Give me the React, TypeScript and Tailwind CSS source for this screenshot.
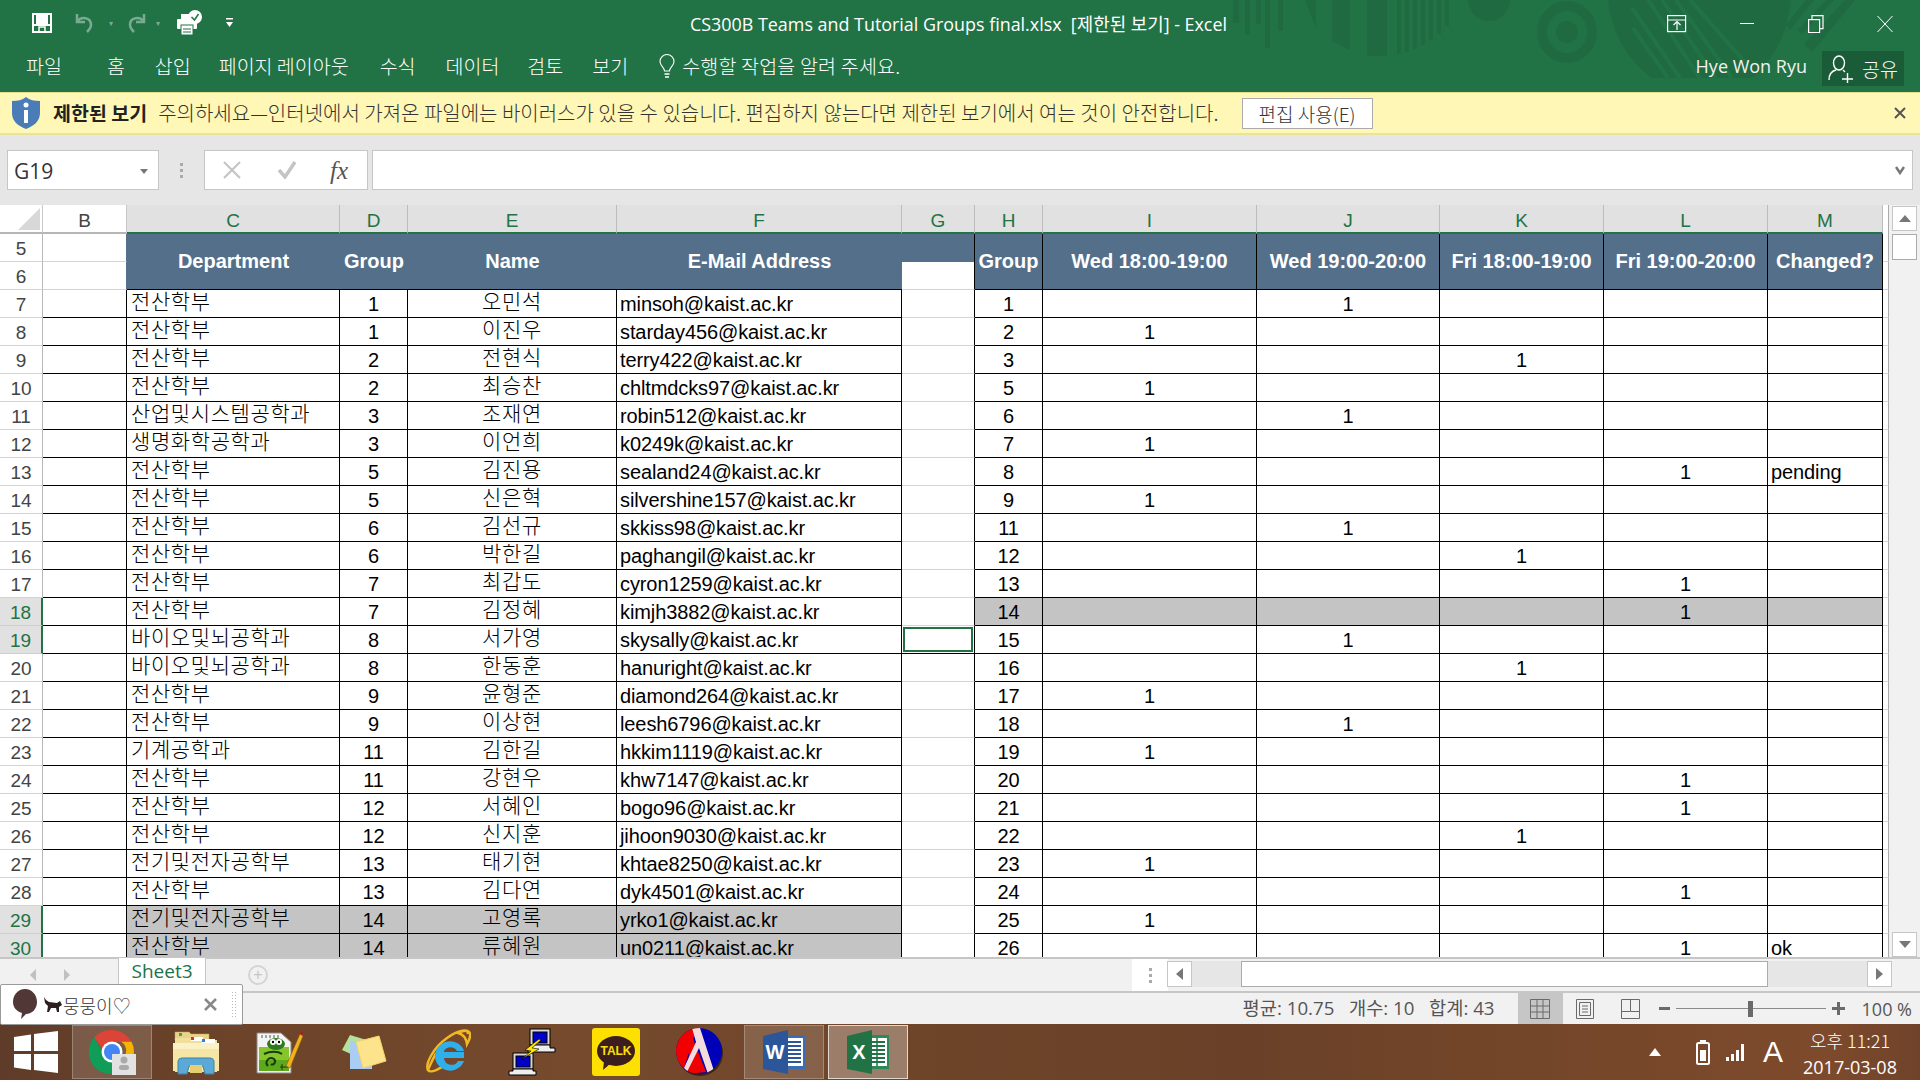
import React from "react";

type R = [number, string, number, string, string, number, number, string?];
// row, dept, group, name, email, h, mark column (0=I,1=J,2=K,3=L), changed
const rows: R[] = [
  [7, "전산학부", 1, "오민석", "minsoh@kaist.ac.kr", 1, 1],
  [8, "전산학부", 1, "이진우", "starday456@kaist.ac.kr", 2, 0],
  [9, "전산학부", 2, "전현식", "terry422@kaist.ac.kr", 3, 2],
  [10, "전산학부", 2, "최승찬", "chltmdcks97@kaist.ac.kr", 5, 0],
  [11, "산업및시스템공학과", 3, "조재연", "robin512@kaist.ac.kr", 6, 1],
  [12, "생명화학공학과", 3, "이언희", "k0249k@kaist.ac.kr", 7, 0],
  [13, "전산학부", 5, "김진용", "sealand24@kaist.ac.kr", 8, 3, "pending"],
  [14, "전산학부", 5, "신은혁", "silvershine157@kaist.ac.kr", 9, 0],
  [15, "전산학부", 6, "김선규", "skkiss98@kaist.ac.kr", 11, 1],
  [16, "전산학부", 6, "박한길", "paghangil@kaist.ac.kr", 12, 2],
  [17, "전산학부", 7, "최갑도", "cyron1259@kaist.ac.kr", 13, 3],
  [18, "전산학부", 7, "김정혜", "kimjh3882@kaist.ac.kr", 14, 3],
  [19, "바이오및뇌공학과", 8, "서가영", "skysally@kaist.ac.kr", 15, 1],
  [20, "바이오및뇌공학과", 8, "한동훈", "hanuright@kaist.ac.kr", 16, 2],
  [21, "전산학부", 9, "윤형준", "diamond264@kaist.ac.kr", 17, 0],
  [22, "전산학부", 9, "이상현", "leesh6796@kaist.ac.kr", 18, 1],
  [23, "기계공학과", 11, "김한길", "hkkim1119@kaist.ac.kr", 19, 0],
  [24, "전산학부", 11, "강현우", "khw7147@kaist.ac.kr", 20, 3],
  [25, "전산학부", 12, "서혜인", "bogo96@kaist.ac.kr", 21, 3],
  [26, "전산학부", 12, "신지훈", "jihoon9030@kaist.ac.kr", 22, 2],
  [27, "전기및전자공학부", 13, "태기현", "khtae8250@kaist.ac.kr", 23, 0],
  [28, "전산학부", 13, "김다연", "dyk4501@kaist.ac.kr", 24, 3],
  [29, "전기및전자공학부", 14, "고영록", "yrko1@kaist.ac.kr", 25, 0],
  [30, "전산학부", 14, "류혜원", "un0211@kaist.ac.kr", 26, 3, "ok"],
];

const black = "border-r border-b border-black";
const soft = "border-r border-b border-[#d4d4d4]";
const ko = "font-['Noto_Sans_CJK_KR',sans-serif] font-light text-[21px] tracking-[0.6px] leading-none";
const num = "text-[20px] tracking-[-0.1px] leading-none";

function ColHead({ t, white }: { t: string; white?: boolean }) {
  return (
    <div className={white
      ? "bg-white border-r border-r-[#c8c8c8] border-b-2 border-b-[#b5b5b5] flex items-center justify-center pt-[3px] text-[19px] leading-none text-[#444]"
      : "bg-[#e1e1e1] border-r border-r-[#bdbdbd] border-b-2 border-b-[#217346] flex items-center justify-center pt-[3px] text-[19px] leading-none text-[#217346]"}>
      {t}
    </div>
  );
}

function RowHead({ n, on }: { n: number; on?: boolean }) {
  return (
    <div className={on
      ? "bg-[#e1e1e1] border-r-2 border-r-[#217346] border-b border-b-[#cfcfcf] flex items-center justify-center pt-[1px] text-[19px] leading-none text-[#217346]"
      : "bg-white border-r border-r-[#b8b8b8] border-b border-b-[#d4d4d4] flex items-center justify-center pt-[1px] text-[19px] leading-none text-[#444]"}>
      {n}
    </div>
  );
}

function Head({ t, sep }: { t: string; sep?: boolean }) {
  return (
    <div className={`row-span-2 bg-[#546f8a] border-b border-black ${sep ? "border-r" : ""} flex items-center justify-center pb-[2px] text-white font-bold text-[20px] leading-none`}>
      {t}
    </div>
  );
}

function DataRow({ r }: { r: R }) {
  const [n, dept, g, name, email, h, mark, ch] = r;
  const leftGray = n >= 29;
  const rightGray = n === 18;
  const lb = leftGray ? "bg-[#c4c4c4]" : "bg-white";
  const rb = rightGray ? "bg-[#c4c4c4]" : "bg-white";
  return (
    <>
      <RowHead n={n} on={n === 18 || n === 19 || n >= 29} />
      <div className={`${black} bg-white`} />
      <div className={`${black} ${lb} flex items-center pl-[4px] pb-[6px] text-black ${ko}`}>{dept}</div>
      <div className={`${black} ${lb} flex items-center justify-center text-black ${num}`}>{g}</div>
      <div className={`${black} ${lb} flex items-center justify-center pb-[6px] text-black ${ko}`}>{name}</div>
      <div className={`${black} ${lb} flex items-center pl-[3px] text-black ${num}`}>{email}</div>
      {n === 19 ? (
        <div className="border-r border-b border-black bg-white p-[1px]">
          <div className="h-full w-full border-2 border-[#217346] bg-white" />
        </div>
      ) : (
        <div className="border-r border-r-black border-b border-b-[#d4d4d4] bg-white" />
      )}
      <div className={`${black} ${rb} flex items-center justify-center text-black ${num}`}>{h}</div>
      {[0, 1, 2, 3].map((c) => (
        <div key={c} className={`${black} ${rb} flex items-center justify-center text-black ${num}`}>
          {mark === c ? 1 : ""}
        </div>
      ))}
      <div className={`${black} ${rb} flex items-center pl-[3px] text-black ${num}`}>{ch}</div>
      <div className={`${soft} border-r-[#aaaaaa] bg-white`} />
    </>
  );
}

function TitlePattern() {
  return (
    <svg className="absolute left-[1220px] top-0 pointer-events-none" width="700" height="92" viewBox="1220 0 700 92" fill="#1f6a41">
      <rect x="1233" y="0" width="6" height="23" />
      <rect x="1245" y="0" width="5" height="35" />
      <rect x="1256" y="0" width="5" height="24" />
      <rect x="1265" y="0" width="5" height="48" />
      <rect x="1278" y="0" width="5" height="31" />
      <path d="M1305 0 L1316 0 L1316 28 Z" />
      <path d="M1332 0 H1350 V50 L1332 41 Z" />
      <path d="M1367 0 H1387 V56 H1367 Z" />
      <rect x="1397" y="0" width="4" height="54" />
      <rect x="1405" y="0" width="4" height="52" />
      <rect x="1413" y="0" width="4" height="49" />
      <rect x="1421" y="0" width="4" height="45" />
      <rect x="1429" y="0" width="4" height="40" />
      <rect x="1437" y="0" width="4" height="34" />
      <rect x="1445" y="0" width="4" height="26" />
      <path d="M1468 0 A21 21 0 0 0 1510 0 Z" />
      <ellipse cx="1567" cy="32" rx="25" ry="26" fill="none" stroke="#1f6a41" strokeWidth="10" />
      <circle cx="1567" cy="32" r="11" />
      <path d="M1608 0 C1612 36 1630 62 1652 78 L1752 78 C1776 58 1788 30 1791 0 Z" />
      <g stroke="#217346" strokeWidth="4" fill="none">
        <path d="M1632 8 L1680 78" />
        <path d="M1633 28 L1668 78" />
        <path d="M1648 0 L1700 78" />
        <path d="M1662 0 L1716 78" />
        <path d="M1676 0 L1732 78" />
        <path d="M1690 0 L1745 62" />
      </g>
      <path d="M1806 0 L1814 0 L1790 30 L1786 25 Z" />
      <path d="M1826 0 L1834 0 L1802 34 L1798 30 Z" />
      <path d="M1845 0 L1855 0 L1812 52 L1804 44 Z" />
    </svg>
  );
}

function Chrome() {
  return (
    <svg width="48" height="46" viewBox="0 0 48 46">
      <path d="M24 1a22 22 0 0 1 19.5 11.8H24a10 10 0 0 0-9.6 7L6.2 8.500A22 22 0 0 1 24 1z" fill="#db4437" />
      <path d="M43.500 12.800A22 22 0 0 1 26 44.900l10-17.200A10 10 0 0 0 33 12.800z" fill="#f4b400" />
      <path d="M6.200 8.500l9 15.600A10 10 0 0 0 27 32.500l-3 12.500A22 22 0 0 1 6.200 8.500z" fill="#0f9d58" />
      <circle cx="24" cy="23" r="10.500" fill="#fff" />
      <circle cx="24" cy="23" r="8" fill="#4285f4" />
      <rect x="24" y="25" width="24" height="21" fill="#e2e2e2" />
      <circle cx="36" cy="31" r="3.500" fill="#a9a9a9" />
      <rect x="31" y="36" width="10" height="5" rx="2.500" fill="#a9a9a9" />
    </svg>
  );
}

function Folder() {
  return (
    <svg width="48" height="46" viewBox="0 0 48 46">
      <path d="M3 3h14l2 2h18v6H3z" fill="#e8d38a" stroke="#bfa65a" strokeWidth=".5" />
      <rect x="7" y="4" width="3" height="3" fill="#3fa34d" />
      <path d="M3 9h20l2 2h20v32H3z" fill="#f1de9a" />
      <rect x="19" y="8" width="12" height="4" fill="#fff" />
      <rect x="19" y="8" width="3" height="3" fill="#d9342b" />
      <rect x="30" y="10" width="13" height="4" fill="#fff" />
      <rect x="30" y="10" width="3" height="3" fill="#2f7fd0" />
      <path d="M1 14h46v28H1z" fill="#f6e6a6" />
      <path d="M1 14h46v6H1z" fill="#fbf1c6" />
      <path d="M6 45V32a4 4 0 0 1 4-3h28a4 4 0 0 1 4 3v13h-9l-2-8H17l-2 8z" fill="#5aa9d6" stroke="#3a82ad" />
      <rect x="18" y="36" width="12" height="8" fill="#e6cf70" />
    </svg>
  );
}

function NotepadPP() {
  return (
    <svg width="48" height="44" viewBox="0 0 48 44">
      <path d="M1 3h24l10 9v31H1z" fill="#f4f4f4" stroke="#8a8a8a" />
      <path d="M3 17h30v24H3z" fill="#86c62c" />
      <path d="M3 30h30v11H3z" fill="#5da81d" />
      <path d="M6 5v3M10 5v3M14 5v3M18 5v3M22 5v3" stroke="#555" />
      <ellipse cx="20" cy="14" rx="9" ry="6" fill="#2c7a1c" />
      <circle cx="17" cy="12" r="3" fill="#fff" />
      <circle cx="23" cy="12" r="3" fill="#fff" />
      <circle cx="17" cy="12" r="1.200" />
      <circle cx="23" cy="12" r="1.200" />
      <path d="M8 24c6-3 14-3 18 0M12 36c-4-4 1-10 6-7 3 3-1 7-3 5" fill="none" stroke="#143d0b" strokeWidth="2" />
      <path d="M24 37h8M26 34v6" stroke="#143d0b" />
      <path d="M30 36L44 4l3 2-13 32z" fill="#f1b420" stroke="#8a5c10" strokeWidth=".6" />
      <path d="M44 4l1-3 2 1v3z" fill="#a52020" />
    </svg>
  );
}

function Sticky() {
  return (
    <svg width="46" height="38" viewBox="0 0 46 38">
      <path d="M1 17L9 2l20 6-8 18z" fill="#b4e29c" />
      <path d="M9 8h22v28H9z" fill="#a9cdf3" />
      <path d="M15 9l23-6 7 25-23 7z" fill="#fde48c" stroke="#f4d36a" />
    </svg>
  );
}

function IE() {
  return (
    <svg width="46" height="46" viewBox="0 0 46 46">
      <path d="M3 41C0 35 8 19 22 9 33 1 44-1 45 5c1 3-2 8-3 10-1-7-5-10-9-11 7-3 10-3 10 1" fill="none" stroke="#f2b824" strokeWidth="2.500" />
      <path d="M11 24C8 30 4 38 3 41c2 3 9 0 14-3" fill="none" stroke="#f2b824" strokeWidth="2.500" />
      <path d="M10 26a15 15 0 0 1 29-4H32a7.500 7.500 0 0 0-13 0v1h20v6H19a7.500 7.500 0 0 0 14 3h6a15 15 0 0 1-29-6z" fill="#2fb0ea" />
    </svg>
  );
}

function Putty() {
  return (
    <svg width="48" height="48" viewBox="0 0 48 48">
      <g stroke="#000" strokeWidth="1">
        <rect x="22" y="1" width="20" height="16" fill="#d8d8d8" />
        <rect x="25" y="4" width="14" height="11" fill="#0000c8" />
        <path d="M22 17h20v3h5v4H20v-4h2z" fill="#efefef" />
        <rect x="5" y="25" width="20" height="16" fill="#d8d8d8" />
        <rect x="8" y="28" width="14" height="11" fill="#0000c8" />
        <path d="M5 41h20v2h3v4H1v-4h4z" fill="#efefef" />
      </g>
      <path d="M31 11L17 22l6 1-9 8 17-10-7-1 9-8z" fill="#ffe600" stroke="#000" strokeWidth=".6" />
    </svg>
  );
}

function Talk() {
  return (
    <div className="w-[48px] h-[48px] bg-[#fee000] rounded-[3px] flex items-center justify-center relative">
      <div className="w-[38px] h-[30px] bg-[#3c1e1e] rounded-[50%] flex items-center justify-center text-[#fee000] text-[12px] font-bold leading-none mb-[3px] font-['Liberation_Sans',sans-serif]">TALK</div>
      <svg className="absolute left-[11px] top-[33px]" width="8" height="9" viewBox="0 0 8 9"><path d="M1 0L0 9l8-7z" fill="#3c1e1e" /></svg>
    </div>
  );
}

function Racket() {
  return (
    <svg width="48" height="48" viewBox="0 0 48 48">
      <defs>
        <clipPath id="rk"><ellipse cx="23" cy="23" rx="23" ry="23" /></clipPath>
      </defs>
      <ellipse cx="24" cy="25" rx="23" ry="23" fill="#3a2318" />
      <g clipPath="url(#rk)">
        <rect width="48" height="48" fill="#0000b8" />
        <path d="M0 0h21l-4 12L6 46H0z" fill="#f00000" />
        <path d="M15 6L30 44 L11 46z" fill="#f00000" />
        <path d="M16 0h8l15 46h-7L23 20 11 44 8 40 20 14z" fill="#f4dcdc" />
      </g>
    </svg>
  );
}

function OfficeIcon({ letter, dark, light }: { letter: string; dark: string; light: string }) {
  return (
    <svg width="44" height="44" viewBox="0 0 44 44">
      <rect x="17" y="5" width="26" height="34" fill={light} />
      <rect x="22" y="8" width="19" height="28" fill="#fff" />
      <path d="M24 12h15M24 16h15M24 20h15M24 24h15M24 28h15M24 32h15" stroke={dark} strokeWidth="2" />
      {letter === "X" && <path d="M31 8v28" stroke={dark} strokeWidth="1.500" />}
      <path d="M1 6L26 0v44L1 39z" fill={dark} />
      <text x="13" y="29" textAnchor="middle" fontFamily="Liberation Sans" fontWeight="700" fontSize="20" fill="#fff">{letter}</text>
    </svg>
  );
}

function Save() {
  return (
    <svg width="22" height="22" viewBox="0 0 22 22" fill="none" stroke="#fff" strokeWidth="2">
      <path d="M2 2h18v18H2z" fill="#217346" />
      <path d="M2 13h18" />
      <rect x="5" y="2" width="12" height="10" fill="#fff" stroke="none" />
      <rect x="8" y="15" width="6" height="5" strokeWidth="1.500" />
    </svg>
  );
}

function Tile({ children, cls }: { children: React.ReactNode; cls?: string }) {
  return <div className={`w-[80px] h-[54px] flex items-center justify-center shrink-0 border ${cls ?? "border-transparent"}`}>{children}</div>;
}

export default function App() {
  return (
    <div className="w-[1920px] h-[1080px] overflow-hidden flex flex-col bg-[#e6e6e6] font-['Liberation_Sans','Noto_Sans_CJK_KR',sans-serif] text-black">
      {/* Title + ribbon tabs */}
      <header className="relative h-[92px] shrink-0 bg-[#217346] text-white overflow-hidden font-['Open_Sans','Noto_Sans_CJK_KR',sans-serif]">
        <TitlePattern />
        <div className="relative h-[46px] flex items-center">
          <div className="w-[690px] flex items-center pl-[31px] shrink-0">
            <Save />
            <svg className="ml-[21px] opacity-40" width="26" height="22" viewBox="0 0 26 22" fill="none" stroke="#fff" strokeWidth="2.500"><path d="M3 2v8h8M3 10c4-6 14-5 14 3 0 3-2 5-4 7" /></svg>
            <span className="ml-[9px] text-[8px] opacity-40">▾</span>
            <svg className="ml-[8px] opacity-40" width="26" height="22" viewBox="0 0 26 22" fill="none" stroke="#fff" strokeWidth="2.500"><path d="M23 2v8h-8M23 10c-4-6-14-5-14 3 0 3 2 5 4 7" /></svg>
            <span className="ml-[9px] text-[8px] opacity-40">▾</span>
            <svg className="ml-[16px]" width="28" height="26" viewBox="0 0 28 26"><rect x="1" y="9" width="20" height="10" rx="1" fill="#fff" /><rect x="5" y="4" width="12" height="5" fill="#fff" /><rect x="5" y="15" width="12" height="10" fill="#fff" stroke="#217346" /><path d="M7 19h8M7 22h8" stroke="#217346" /><circle cx="19" cy="7" r="7" fill="#fff" /><path d="M15.500 7l3 3 4-6" stroke="#217346" fill="none" strokeWidth="1.500" /></svg>
            <svg className="ml-[21px]" width="10" height="12" viewBox="0 0 10 12" fill="#fff"><rect x="1" y="1" width="7" height="1.500" /><path d="M1 5h7L4.500 10z" /></svg>
          </div>
          <div className="text-[17.900px] whitespace-pre leading-none pt-[4px]">CS300B Teams and Tutorial Groups final.xlsx  [제한된 보기] - Excel</div>
          <div className="ml-auto flex items-center pr-[27px] pt-[1px]">
            <svg width="20" height="18" viewBox="0 0 20 18" fill="none" stroke="#fff" strokeWidth="1.200"><rect x=".6" y=".6" width="18" height="16" /><path d="M1 5h18M10 15V7M6.500 10L10 6.500l3.500 3.500" /></svg>
            <div className="ml-[53px] w-[14px] h-[1px] bg-white" />
            <svg className="ml-[54px]" width="16" height="18" viewBox="0 0 16 18" fill="none" stroke="#fff" strokeWidth="1.200"><rect x=".6" y="4.600" width="11" height="13" /><path d="M4 4.500V.6h11v13h-3" /></svg>
            <svg className="ml-[53px]" width="16" height="18" viewBox="0 0 16 18" fill="none" stroke="#fff" strokeWidth="1"><path d="M.5 1l15 16M15.500 1L.5 17" /></svg>
          </div>
        </div>
        <div className="relative h-[46px] flex items-center pl-[26px] text-[19.500px] font-['Noto_Sans_CJK_KR',sans-serif] font-light leading-none pb-[6px]">
          <span>파일</span>
          <span className="ml-[45px]">홈</span>
          <span className="ml-[30px]">삽입</span>
          <span className="ml-[28px]">페이지 레이아웃</span>
          <span className="ml-[31px]">수식</span>
          <span className="ml-[30px]">데이터</span>
          <span className="ml-[28px]">검토</span>
          <span className="ml-[29px]">보기</span>
          <svg className="ml-[31px]" width="16" height="24" viewBox="0 0 16 24" fill="none" stroke="#fff" strokeWidth="1.100"><path d="M5.500 17c0-4-4.500-5-4.500-9.500a7 7 0 0 1 14 0c0 4.500-4.500 5.500-4.500 9.500z" /><path d="M5.500 20h5M6 23h4" strokeWidth="1.500" /></svg>
          <span className="ml-[7px] tracking-[0.2px]">수행할 작업을 알려 주세요.</span>
          <span className="ml-auto mr-[15px] font-['Open_Sans',sans-serif] font-normal text-[18px] text-[#f2f2f2]">Hye Won Ryu</span>
          <div className="w-[82px] h-[35px] mr-[16px] bg-[#1b5c38] flex items-center justify-center gap-[8px] mt-[5px]">
            <svg width="26" height="30" viewBox="0 0 26 30" fill="none" stroke="#fff" strokeWidth="1.400"><ellipse cx="11" cy="9" rx="5.500" ry="7" /><path d="M1 26c0-6 3-9 7-10M15 16l2 2M14 25h11M19.500 19v10" /></svg>
            <span>공유</span>
          </div>
        </div>
      </header>

      {/* Protected view bar */}
      <div className="h-[43px] shrink-0 bg-[#fff7b6] border-t border-t-[#e3de8f] border-b-2 border-b-[#e9e49a] flex items-center pl-[12px] pr-[14px] text-[20px] text-[#333] font-['Noto_Sans_CJK_KR',sans-serif] font-light leading-none">
        <svg width="28" height="32" viewBox="0 0 28 32"><path d="M14 0c4 3 8 4 14 4v12c0 8-6 13-14 16C6 29 0 24 0 16V4c6 0 10-1 14-4z" fill="#4a7db8" /><circle cx="14" cy="8" r="2.500" fill="#fff" /><rect x="12" y="13" width="4" height="13" fill="#fff" /></svg>
        <b className="ml-[13px] font-bold text-[19.500px] text-[#222] whitespace-nowrap">제한된 보기</b>
        <span className="ml-[11px] whitespace-nowrap">주의하세요—인터넷에서 가져온 파일에는 바이러스가 있을 수 있습니다. 편집하지 않는다면 제한된 보기에서 여는 것이 안전합니다.</span>
        <div className="ml-[23px] w-[131px] h-[31px] shrink-0 bg-white border border-[#ababab] flex items-center justify-center text-[19px]">편집 사용(E)</div>
        <svg className="ml-auto" width="12" height="12" viewBox="0 0 12 12" stroke="#555" strokeWidth="2"><path d="M1 1l10 10M11 1L1 11" /></svg>
      </div>

      {/* Formula bar */}
      <div className="h-[70px] shrink-0 bg-[#e6e6e6] flex items-center pl-[7px] pr-[7px]">
        <div className="w-[152px] h-[40px] bg-white border border-[#c6c6c6] flex items-center justify-between pl-[6px] pr-[10px] pt-[3px] text-[21px] leading-none text-[#333] font-['Open_Sans',sans-serif]">
          <span>G19</span>
          <svg width="8" height="5" viewBox="0 0 8 5" fill="#777"><path d="M0 0h8L4 5z" /></svg>
        </div>
        <div className="w-[45px] flex flex-col items-center gap-[3px]">
          <div className="w-[3px] h-[3px] bg-[#aaa]" />
          <div className="w-[3px] h-[3px] bg-[#aaa]" />
          <div className="w-[3px] h-[3px] bg-[#aaa]" />
        </div>
        <div className="w-[164px] h-[40px] bg-white border border-[#c6c6c6] flex items-center pl-[18px]">
          <svg width="18" height="18" viewBox="0 0 18 18" stroke="#c4c4c4" strokeWidth="2.200"><path d="M1 1l16 16M17 1L1 17" /></svg>
          <svg className="ml-[36px]" width="20" height="18" viewBox="0 0 20 18" fill="none" stroke="#c4c4c4" strokeWidth="3.500"><path d="M2 9l6 7L18 1" /></svg>
          <span className="ml-[33px] font-['Liberation_Serif',serif] italic text-[25px] text-[#555] leading-none">fx</span>
        </div>
        <div className="ml-[4px] flex-1 h-[40px] bg-white border border-[#c6c6c6] flex items-center justify-end pr-[7px]">
          <svg width="10" height="9" viewBox="0 0 10 9" fill="none" stroke="#777" strokeWidth="2.500"><path d="M1 1l4 6 4-6" /></svg>
        </div>
      </div>

      {/* Sheet */}
      <div className="h-[752px] shrink-0 flex overflow-hidden bg-white">
        <div className="w-[1889px] shrink-0 overflow-hidden">
          <div className="grid grid-cols-[43px_84px_213px_68px_209px_285px_73px_68px_214px_183px_164px_164px_115px_6px] grid-rows-[29px] auto-rows-[28px]">
            <div className="bg-white border-r border-r-[#c8c8c8] border-b-2 border-b-[#b5b5b5] flex items-end justify-end pr-[2px] pb-[2px]">
              <svg width="22" height="22" viewBox="0 0 22 22"><path d="M22 0v22H0z" fill="#d8d8d8" /></svg>
            </div>
            <ColHead t="B" white />
            {["C", "D", "E", "F", "G", "H", "I", "J", "K", "L", "M"].map((c) => <ColHead key={c} t={c} />)}
            <div className="bg-white border-r border-r-[#aaaaaa]" />

            <RowHead n={5} />
            <div className="border-r border-r-[#546f8a] border-b border-b-[#d4d4d4]" />
            <Head t="Department" />
            <Head t="Group" />
            <Head t="Name" />
            <Head t="E-Mail Address" />
            <div className="bg-[#546f8a] border-r border-r-black" />
            <Head t="Group" sep />
            <Head t="Wed 18:00-19:00" sep />
            <Head t="Wed 19:00-20:00" sep />
            <Head t="Fri 18:00-19:00" sep />
            <Head t="Fri 19:00-20:00" sep />
            <Head t="Changed?" sep />
            <div className={`${soft} border-r-[#aaaaaa]`} />

            <RowHead n={6} />
            <div className="border-r border-r-[#546f8a] border-b border-b-[#d4d4d4]" />
            <div className="bg-white border-r border-r-black border-b border-b-[#d4d4d4]" />
            <div className={`${soft} border-r-[#aaaaaa]`} />

            {rows.map((r) => <DataRow key={r[0]} r={r} />)}
          </div>
        </div>
        <div className="flex-1 bg-[#f1f1f1] flex flex-col items-center pt-[1px]">
          <div className="w-[25px] h-[25px] bg-white border border-[#c6c6c6] flex items-center justify-center">
            <svg width="12" height="7" viewBox="0 0 12 7" fill="#777"><path d="M0 7L6 0l6 7z" /></svg>
          </div>
          <div className="w-[25px] h-[26px] mt-[3px] bg-white border border-[#ababab]" />
          <div className="mt-auto w-[25px] h-[25px] bg-white border border-[#c6c6c6] flex items-center justify-center">
            <svg width="12" height="7" viewBox="0 0 12 7" fill="#777"><path d="M0 0h12L6 7z" /></svg>
          </div>
        </div>
      </div>

      {/* Tabs + h-scroll */}
      <div className="relative h-[34px] shrink-0 bg-[#f1f1f1] border-t-2 border-t-[#c6c6c6] flex items-start pl-[30px]">
        <svg className="mt-[10px]" width="6" height="12" viewBox="0 0 6 12" fill="#c0c0c0"><path d="M6 0v12L0 6z" /></svg>
        <svg className="mt-[10px] ml-[28px]" width="6" height="12" viewBox="0 0 6 12" fill="#c0c0c0"><path d="M0 0v12l6-6z" /></svg>
        <div className="ml-[48px] w-[88px] h-[27px] bg-white border-x border-b border-[#c6c6c6] -mt-[1px] flex items-center justify-center text-[19px] text-[#217346] font-['Open_Sans',sans-serif]">Sheet3</div>
        <div className="ml-[42px] mt-[6px] w-[20px] h-[20px] rounded-full border-2 border-[#d4d4d4] flex items-center justify-center text-[#c6c6c6] text-[16px] leading-none">+</div>
        <div className="ml-[864px] flex self-stretch items-start w-[770px]">
          <div className="w-[36px] h-[32px] bg-white flex flex-col items-center justify-center gap-[3px]">
            <div className="w-[3px] h-[3px] bg-[#aaa]" />
            <div className="w-[3px] h-[3px] bg-[#aaa]" />
            <div className="w-[3px] h-[3px] bg-[#aaa]" />
          </div>
          <div className="mt-[2px] ml-[-1px] w-[725px] h-[26px] flex bg-[#e6e6e6]">
            <div className="w-[25px] h-full bg-white border border-[#c6c6c6] flex items-center justify-center">
              <svg width="7" height="12" viewBox="0 0 7 12" fill="#777"><path d="M7 0v12L0 6z" /></svg>
            </div>
            <div className="ml-[49px] w-[527px] h-full bg-white border border-[#ababab]" />
            <div className="ml-auto w-[25px] h-full bg-white border border-[#c6c6c6] flex items-center justify-center">
              <svg width="7" height="12" viewBox="0 0 7 12" fill="#777"><path d="M0 0v12l7-6z" /></svg>
            </div>
          </div>
        </div>
      </div>

      {/* Status bar */}
      <div className="relative h-[33px] shrink-0 bg-[#f1f1f1] border-t-2 border-t-[#c6c6c6] flex items-center justify-end text-[#555] text-[18.700px] font-['Open_Sans','Noto_Sans_CJK_KR',sans-serif]">
        <div className="absolute left-0 -top-[9px] w-[243px] h-[41px] bg-white border border-[#9a9a9a] rounded-[2px] flex items-center pl-[11px] z-10">
          <svg width="26" height="32" viewBox="0 0 26 32"><path d="M13 0c7 0 12 6 12 13s-5 12-11 12l-5 5 1-6C4 22 1 18 1 13 1 6 6 0 13 0z" fill="#523737" /></svg>
          <svg className="ml-[5px]" width="20" height="16" viewBox="0 0 20 16" fill="#2d2020"><path d="M1 0l2 3 3 2 8 1 3-2 2 4-3 2v5h-2l-1-4H8l-2 4H4l1-6L2 6z" /></svg>
          <span className="text-[18px] text-[#333] font-['Noto_Sans_CJK_KR',sans-serif] font-light leading-none">뭉뭉이♡</span>
          <svg className="ml-[73px]" width="13" height="13" viewBox="0 0 13 13" stroke="#888" strokeWidth="2.500"><path d="M1 1l11 11M12 1L1 12" /></svg>
          <div className="ml-[14px] w-[6px] h-[28px] bg-[radial-gradient(#bbb_1px,transparent_1px)] bg-[length:3px_3px]" />
        </div>
        <span className="leading-none mr-[23px] whitespace-pre">평균: 10.75   개수: 10   합계: 43</span>
        <div className="w-[45px] h-full bg-[#c6c6c6] flex items-center justify-center">
          <svg width="20" height="20" viewBox="0 0 20 20" fill="none" stroke="#6a6a6a"><path d="M.5.5h19v19H.5zM7 .5v19M13 .5v19M.5 7h19M.5 13h19" /></svg>
        </div>
        <svg className="ml-[13px]" width="18" height="20" viewBox="0 0 18 20" fill="none" stroke="#6a6a6a"><path d="M.5.5h17v19H.5zM3.500 3.500h11v13h-11zM6 7h6M6 10h6M6 13h6" /></svg>
        <svg className="ml-[27px]" width="19" height="20" viewBox="0 0 19 20" fill="none" stroke="#6a6a6a"><path d="M.5.500h18v19H.5zM.5 12.500h9v-12M9.500 12.500h9" /></svg>
        <div className="ml-[19px] w-[11px] h-[3px] bg-[#6a6a6a]" />
        <div className="ml-[6px] relative w-[150px] h-[1px] bg-[#8a8a8a] flex items-center">
          <div className="ml-[72px] w-[5px] h-[16px] bg-[#6a6a6a]" />
        </div>
        <svg className="ml-[6px]" width="13" height="13" viewBox="0 0 13 13" stroke="#6a6a6a" strokeWidth="3"><path d="M0 6.500h13M6.500 0v13" /></svg>
        <span className="ml-[17px] mr-[8px] leading-none text-[18px]">100 %</span>
      </div>

      {/* Taskbar */}
      <div className="h-[56px] shrink-0 flex items-center bg-[linear-gradient(90deg,#5f3c29_0%,#6d4329_12%,#754a2d_30%,#6e4429_50%,#6a4128_65%,#744629_80%,#7e4a2c_95%,#6f432a_100%)]">
        <div className="w-[72px] shrink-0 flex justify-center">
          <svg width="44" height="42" viewBox="0 0 44 42" fill="#fff"><path d="M0 6l17-2.500V20H0zM20 3l24-3v20H20zM0 23h17v16L0 36.500zM20 23h24v19l-24-3z" /></svg>
        </div>
        <div className="flex gap-[4px]">
          <Tile cls="bg-white/15 border-white/25"><Chrome /></Tile>
          <Tile><Folder /></Tile>
          <Tile><NotepadPP /></Tile>
          <Tile><Sticky /></Tile>
          <Tile><IE /></Tile>
          <Tile><Putty /></Tile>
          <Tile><Talk /></Tile>
          <Tile><Racket /></Tile>
          <Tile cls="bg-white/15 border-white/25"><OfficeIcon letter="W" dark="#2b579a" light="#3a6db5" /></Tile>
          <Tile cls="bg-white/30 border-white/70"><OfficeIcon letter="X" dark="#217346" light="#2c8a58" /></Tile>
        </div>
        <div className="ml-auto flex items-center pr-[23px] text-white font-['Open_Sans','Noto_Sans_CJK_KR',sans-serif]">
          <svg width="12" height="8" viewBox="0 0 12 8" fill="#fff"><path d="M0 8L6 0l6 8z" /></svg>
          <svg className="ml-[34px]" width="16" height="26" viewBox="0 0 16 26" fill="none" stroke="#fff" strokeWidth="2"><rect x="2" y="4" width="12" height="21" rx="1.500" /><path d="M5 2h6" /><rect x="5" y="11" width="6" height="11" fill="#fff" stroke="none" /></svg>
          <svg className="ml-[15px]" width="20" height="20" viewBox="0 0 20 20" fill="#fff"><path d="M0 15h3v4H0zM5 12h3v7H5zM10 8h3v11h-3zM15 2h3v17h-3z" /></svg>
          <span className="ml-[17px] text-[30px] font-['Liberation_Sans',sans-serif] leading-none">A</span>
          <div className="ml-[20px] w-[94px] flex flex-col items-center text-[18px] leading-none gap-[9px] pt-[3px]">
            <span className="font-['Noto_Sans_CJK_KR',sans-serif] font-light">오후 11:21</span>
            <span>2017-03-08</span>
          </div>
        </div>
      </div>
    </div>
  );
}
